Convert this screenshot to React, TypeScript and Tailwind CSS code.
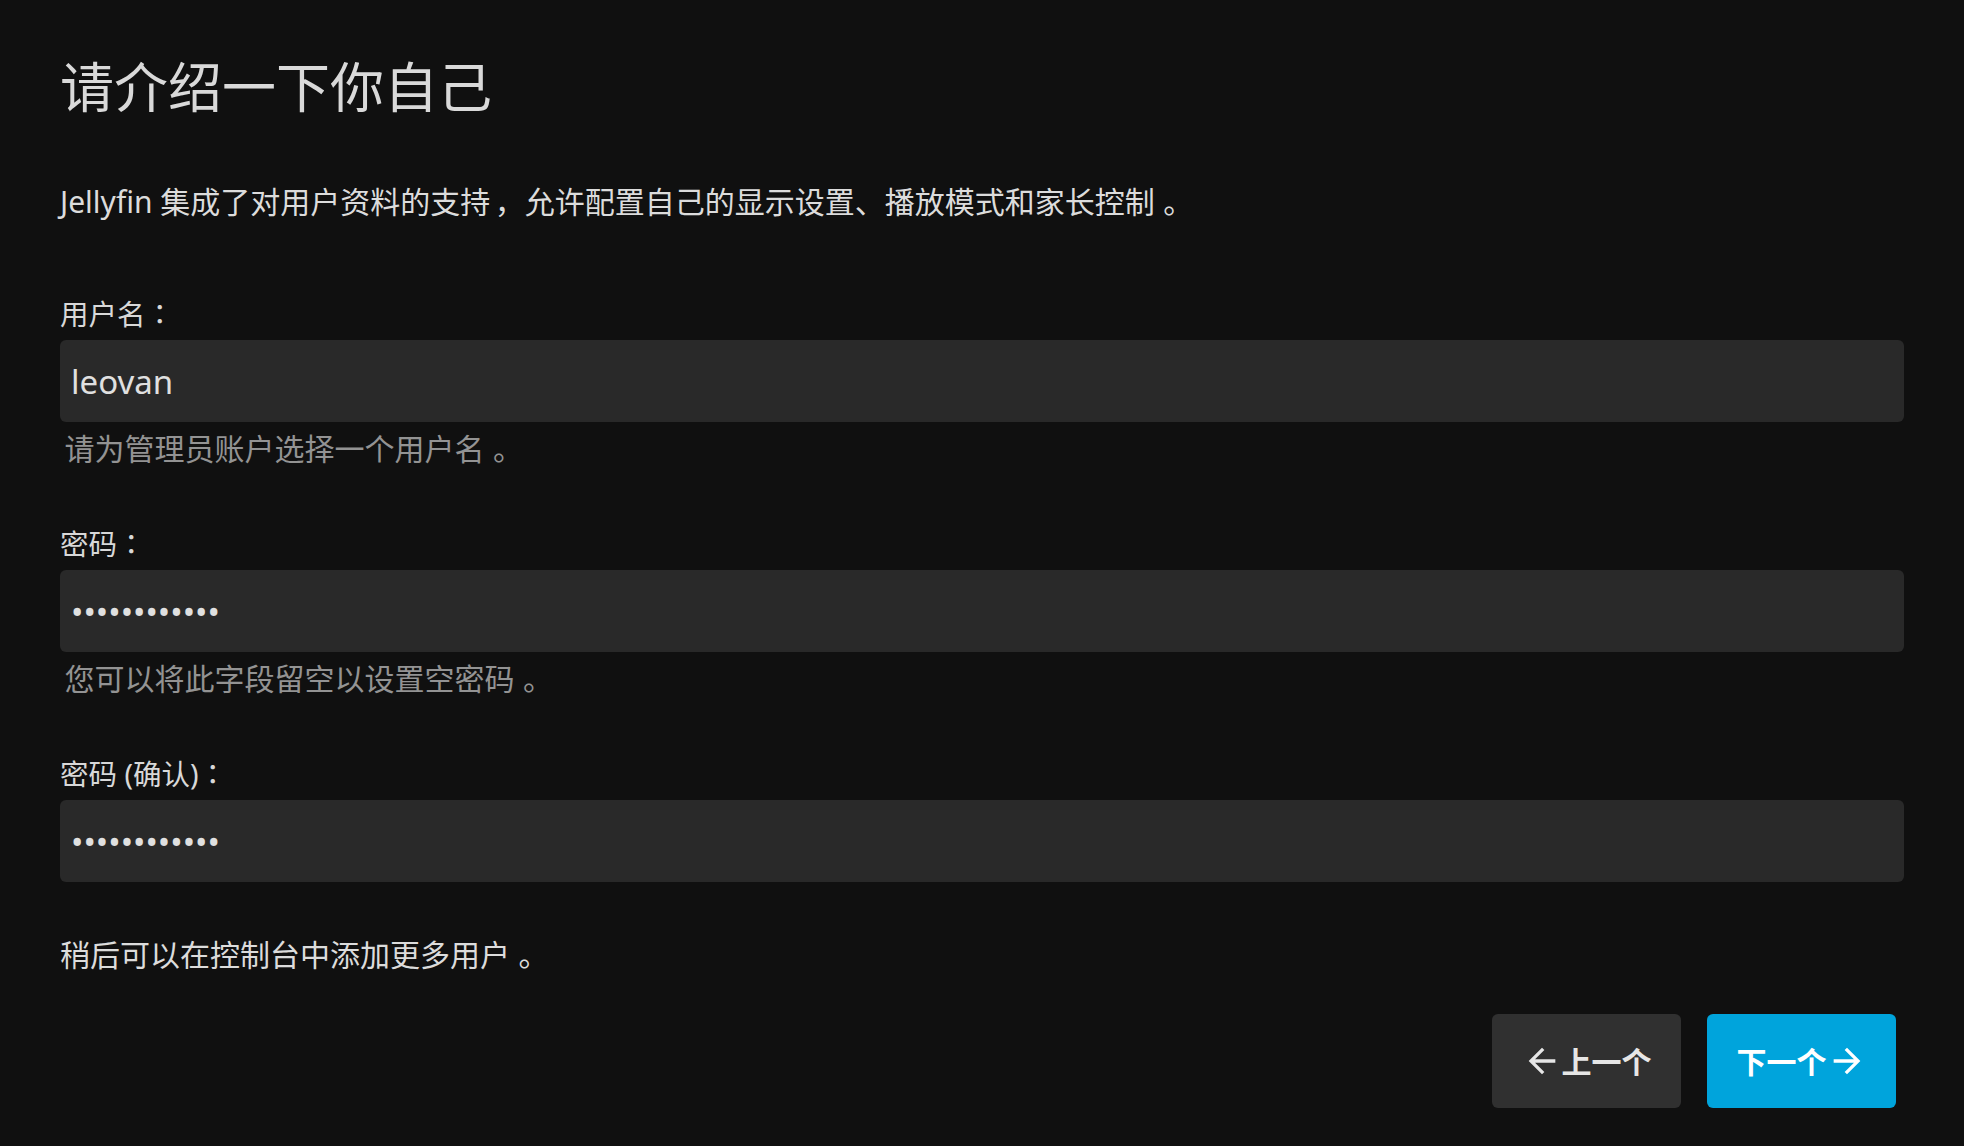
import { useState } from "react";

function ArrowBack() {
  return (
    <svg viewBox="0 0 24 24" className="w-[40px] h-[40px] fill-current shrink-0">
      <path d="M20 11H7.83l5.59-5.59L12 4l-8 8 8 8 1.41-1.41L7.83 13H20v-2z" />
    </svg>
  );
}

function ArrowForward() {
  return (
    <svg viewBox="0 0 24 24" className="w-[40px] h-[40px] fill-current shrink-0">
      <path d="M12 4l-1.41 1.41L16.17 11H4v2h12.17l-5.58 5.59L12 20l8-8z" />
    </svg>
  );
}

// full-width colon, centred in its box
function Colon() {
  return <span className="font-['Noto_Sans_CJK_KR',sans-serif] leading-[0]">：</span>;
}

// full stop sitting in the middle of its box, as in the reference
function Stop() {
  return <span className="relative left-[0.28em] leading-[0]">。</span>;
}

type FieldProps = {
  label: string;
  value: string;
  type?: string;
  help?: string;
  onChange: (v: string) => void;
};

function Field({ label, value, type = "text", help, onChange }: FieldProps) {
  return (
    <div className="flex flex-col">
      <label className="text-[28.5px] leading-[28.5px] text-[#d8d8d8]">
        {label}
        <Colon />
      </label>
      <input
        type={type}
        value={value}
        onChange={(e) => onChange(e.target.value)}
        className="mt-[11.5px] h-[82px] w-full rounded-[6px] bg-[#292929] pl-[11px] text-[33px] text-[#e0e0e0] outline-none"
      />
      {help && (
        <p className="mt-[12px] pl-[4.5px] text-[30px] leading-[30px] text-[#939393]">
          {help}
          <Stop />
        </p>
      )}
    </div>
  );
}

export default function App() {
  const [username, setUsername] = useState<string>("leovan");
  const [password, setPassword] = useState<string>("abcdefghijkl");
  const [confirm, setConfirm] = useState<string>("abcdefghijkl");

  return (
    <div
      className="min-h-screen w-full bg-[#101010] text-[#dcdcdc] px-[60px] pt-[60px] antialiased"
      style={{ fontFamily: '"Noto Sans", "Noto Sans CJK SC", sans-serif' }}
    >
      <h1 className="text-[54px] leading-[54px] font-normal text-[#d9d9d9]">请介绍一下你自己</h1>

      <p className="mt-[73px] text-[30px] leading-[30px]">
        Jellyfin 集成了对用户资料的支持<span className="ml-[0.15em] leading-[0]">，</span>允许配置自己的显示设置、播放模式和家长控制
        <Stop />
      </p>

      <div className="mt-[83px] flex flex-col gap-[66px]">
        <Field
          label="用户名"
          value={username}
          onChange={setUsername}
          help="请为管理员账户选择一个用户名"
        />
        <Field
          label="密码"
          type="password"
          value={password}
          onChange={setPassword}
          help="您可以将此字段留空以设置空密码"
        />
      </div>
      <div className="mt-[66px]">
        <Field label="密码 (确认)" type="password" value={confirm} onChange={setConfirm} />
      </div>

      <p className="mt-[58px] text-[30px] leading-[30px]">
        稍后可以在控制台中添加更多用户
        <Stop />
      </p>

      <div className="mt-[44px] flex justify-end gap-[26px] pr-[8px]">
        <button className="flex h-[94px] w-[189px] items-center justify-center rounded-[6px] bg-[#303030] text-[30px] font-semibold text-[#e6e6e6]">
          <ArrowBack />
          <span>上一个</span>
        </button>
        <button className="flex h-[94px] w-[189px] items-center justify-center rounded-[6px] bg-[#00a4dc] text-[30px] font-semibold text-white">
          <span>下一个</span>
          <ArrowForward />
        </button>
      </div>
    </div>
  );
}
